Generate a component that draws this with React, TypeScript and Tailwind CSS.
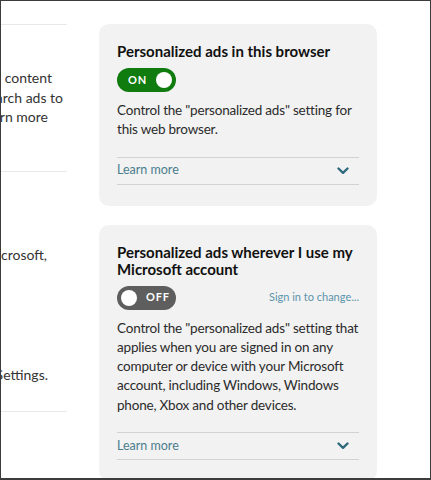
import { ReactNode } from "react";

const font = { fontFamily: 'Lato, "Open Sans", sans-serif' };

function Chevron() {
  return (
    <svg width="12" height="8" viewBox="0 0 12 8" className="text-[#2e6a7d]">
      <polyline
        points="1.5,1.5 6,5.8 10.5,1.5"
        fill="none"
        stroke="currentColor"
        strokeWidth="2.4"
        strokeLinecap="round"
        strokeLinejoin="round"
      />
    </svg>
  );
}

function Toggle({ on }: { on: boolean }) {
  if (on) {
    return (
      <div className="flex h-[24px] w-[59px] items-center justify-between rounded-full bg-[#107c10] pl-[11px] pr-[4px]">
        <span className="text-[11px] font-bold tracking-[0.08em] text-white">ON</span>
        <span className="h-[16px] w-[16px] rounded-full bg-white" />
      </div>
    );
  }
  return (
    <div className="flex h-[24px] w-[59px] items-center gap-[9px] rounded-full bg-[#5e5e5e] pl-[4px]">
      <span className="h-[16px] w-[16px] rounded-full bg-white" />
      <span className="text-[11px] font-bold tracking-[0.08em] text-white">OFF</span>
    </div>
  );
}

function Card({
  title,
  on,
  aside,
  lines,
}: {
  title: string[];
  on: boolean;
  aside?: ReactNode;
  lines: string[];
}) {
  return (
    <div className="w-[278px] rounded-[10px] bg-[#f2f2f2] px-[18px] pb-[21px] pt-[19px]">
      <h2 className="text-[15px] font-bold leading-[17px] text-[#111]">
        {title.map((t) => (
          <span key={t} className="block whitespace-nowrap">
            {t}
          </span>
        ))}
      </h2>
      <div className="mt-[8px] flex items-center justify-between">
        <Toggle on={on} />
        {aside}
      </div>
      <p className="mt-[9px] text-[13.5px] leading-[19.3px] tracking-[-0.2px] text-[#2b2b2b]">
        {lines.map((l) => (
          <span key={l} className="block whitespace-nowrap">
            {l}
          </span>
        ))}
      </p>
      <div className="mt-[17px] flex h-[28px] items-center justify-between border-y border-[#d2d2d2] pr-[10px]">
        <span className="text-[12.5px] text-[#4b7d8d]">Learn more</span>
        <Chevron />
      </div>
    </div>
  );
}

export default function App() {
  return (
    <div
      className="flex h-[480px] w-[431px] overflow-hidden border border-b-2 border-[#3c3c3c] bg-white"
      style={font}
    >
      {/* clipped left column */}
      <div className="flex w-[66px] shrink-0 flex-col text-[14px] text-[#333]">
        <div className="mt-[23px] border-t border-[#e8e8e8]" />
        <div className="mt-[43px] flex flex-col items-end leading-[19.5px]">
          <div className="whitespace-nowrap pr-[15px]">and content</div>
          <div className="whitespace-nowrap pr-[4px]">search ads to</div>
          <div className="whitespace-nowrap pr-[19px]">Learn more</div>
        </div>
        <div className="mt-[44px] border-t border-[#e8e8e8]" />
        <div className="mt-[73px] flex flex-col items-end leading-[19.5px]">
          <div className="whitespace-nowrap pr-[20px]">Microsoft,</div>
        </div>
        <div className="mt-[101px] flex flex-col items-end leading-[19.5px]">
          <div className="whitespace-nowrap pr-[19px]">in Settings.</div>
        </div>
        <div className="mt-[26px] border-t border-[#e8e8e8]" />
      </div>

      <div className="ml-[32px] flex flex-col gap-[19px] pt-[23px]">
        <Card
          title={["Personalized ads in this browser"]}
          on
          lines={['Control the "personalized ads" setting for', "this web browser."]}
        />
        <Card
          title={["Personalized ads wherever I use my", "Microsoft account"]}
          on={false}
          aside={<span className="text-[11px] text-[#5a94ab]">Sign in to change...</span>}
          lines={[
            'Control the "personalized ads" setting that',
            "applies when you are signed in on any",
            "computer or device with your Microsoft",
            "account, including Windows, Windows",
            "phone, Xbox and other devices.",
          ]}
        />
      </div>
    </div>
  );
}
